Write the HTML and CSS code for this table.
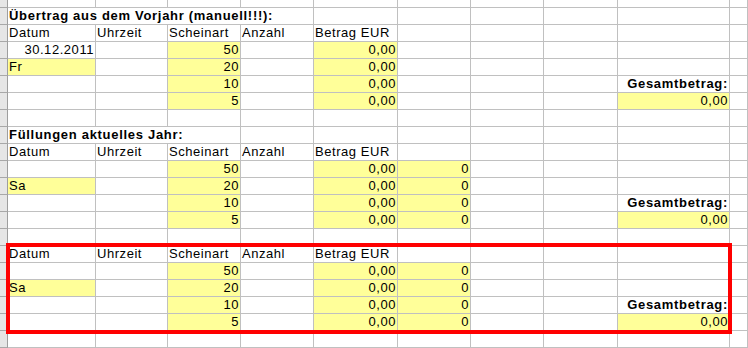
FILE: index.html
```html
<!DOCTYPE html>
<html lang="de">
<head>
<meta charset="utf-8">
<title>Tabelle</title>
<link rel="stylesheet" href="styles.css">
</head>
<body>
<div class="sheet">
  <div class="r top"><div class="h"></div><div></div><div></div><div></div><div></div><div></div><div></div><div></div><div></div><div></div><div></div></div>
  <div class="r"><div class="h"></div><div class="t4 b">Übertrag aus dem Vorjahr (manuell!!!):</div><div></div><div></div><div></div><div></div><div></div><div></div></div>
  <div class="r"><div class="h"></div><div>Datum</div><div>Uhrzeit</div><div>Scheinart</div><div>Anzahl</div><div>Betrag EUR</div><div></div><div></div><div></div><div></div><div></div></div>
  <div class="r"><div class="h"></div><div class="n">30.12.2011</div><div></div><div class="y n">50</div><div></div><div class="y n">0,00</div><div></div><div></div><div></div><div></div><div></div></div>
  <div class="r"><div class="h"></div><div class="y">Fr</div><div></div><div class="y n">20</div><div></div><div class="y n">0,00</div><div></div><div></div><div></div><div></div><div></div></div>
  <div class="r"><div class="h"></div><div></div><div></div><div class="y n">10</div><div></div><div class="y n">0,00</div><div></div><div></div><div></div><div class="b n">Gesamtbetrag:</div><div></div></div>
  <div class="r"><div class="h"></div><div></div><div></div><div class="y n">5</div><div></div><div class="y n">0,00</div><div></div><div></div><div></div><div class="y n">0,00</div><div></div></div>
  <div class="r"><div class="h"></div><div></div><div></div><div></div><div></div><div></div><div></div><div></div><div></div><div></div><div></div></div>

  <div class="r"><div class="h"></div><div class="t3 b">Füllungen aktuelles Jahr:</div><div></div><div></div><div></div><div></div><div></div><div></div><div></div></div>
  <div class="r"><div class="h"></div><div>Datum</div><div>Uhrzeit</div><div>Scheinart</div><div>Anzahl</div><div>Betrag EUR</div><div></div><div></div><div></div><div></div><div></div></div>
  <div class="r"><div class="h"></div><div></div><div></div><div class="y n">50</div><div></div><div class="y n">0,00</div><div class="y n">0</div><div></div><div></div><div></div><div></div></div>
  <div class="r"><div class="h"></div><div class="y">Sa</div><div></div><div class="y n">20</div><div></div><div class="y n">0,00</div><div class="y n">0</div><div></div><div></div><div></div><div></div></div>
  <div class="r"><div class="h"></div><div></div><div></div><div class="y n">10</div><div></div><div class="y n">0,00</div><div class="y n">0</div><div></div><div></div><div class="b n">Gesamtbetrag:</div><div></div></div>
  <div class="r"><div class="h"></div><div></div><div></div><div class="y n">5</div><div></div><div class="y n">0,00</div><div class="y n">0</div><div></div><div></div><div class="y n">0,00</div><div></div></div>
  <div class="r"><div class="h"></div><div></div><div></div><div></div><div></div><div></div><div></div><div></div><div></div><div></div><div></div></div>

  <div class="r"><div class="h"></div><div>Datum</div><div>Uhrzeit</div><div>Scheinart</div><div>Anzahl</div><div>Betrag EUR</div><div></div><div></div><div></div><div></div><div></div></div>
  <div class="r"><div class="h"></div><div></div><div></div><div class="y n">50</div><div></div><div class="y n">0,00</div><div class="y n">0</div><div></div><div></div><div></div><div></div></div>
  <div class="r"><div class="h"></div><div class="y">Sa</div><div></div><div class="y n">20</div><div></div><div class="y n">0,00</div><div class="y n">0</div><div></div><div></div><div></div><div></div></div>
  <div class="r"><div class="h"></div><div></div><div></div><div class="y n">10</div><div></div><div class="y n">0,00</div><div class="y n">0</div><div></div><div></div><div class="b n">Gesamtbetrag:</div><div></div></div>
  <div class="r"><div class="h"></div><div></div><div></div><div class="y n">5</div><div></div><div class="y n">0,00</div><div class="y n">0</div><div></div><div></div><div class="y n">0,00</div><div></div></div>
  <div class="r"><div class="h"></div><div></div><div></div><div></div><div></div><div></div><div></div><div></div><div></div><div></div><div></div></div>
  <div class="r"><div class="h"></div><div></div><div></div><div></div><div></div><div></div><div></div><div></div><div></div><div></div><div></div></div>

  <div class="mark"></div>
</div>
</body>
</html>
```
FILE: styles.css
```css
html, body {
  margin: 0;
  padding: 0;
  background: #ffffff;
}
body {
  width: 748px;
  height: 348px;
  overflow: hidden;
  font-family: "Liberation Sans", Arial, sans-serif;
  font-size: 13px;
  color: #000000;
}
.sheet {
  position: relative;
  width: 748px;
  height: 348px;
  overflow: hidden;
}
.r {
  display: grid;
  grid-template-columns: 8px 88px 72px 73px 73px 84px 73px 73px 74px 112px 1fr;
  height: 17px;
}
.r.top {
  height: 8px;
}
.r > div {
  border-right: 1px solid #c0c0c0;
  border-bottom: 1px solid #c0c0c0;
  padding: 0 1px 0 1px;
  line-height: 15px;
  letter-spacing: 0.55px;
  white-space: nowrap;
  overflow: hidden;
  min-width: 0;
}
.r > .h {
  background: #e6e6e6;
  border-right: 1px solid #9e9e9e;
  border-bottom: 1px solid #a8a8a8;
  padding: 0;
}
.r > .t4 {
  grid-column: span 4;
  overflow: visible;
}
.r > .t3 {
  grid-column: span 3;
  overflow: visible;
}
.r > .b {
  font-weight: bold;
  letter-spacing: 0.7px;
}
.n {
  text-align: right;
}
.y {
  background: #ffff99;
}
.mark {
  position: absolute;
  left: 6px;
  top: 243px;
  width: 726px;
  height: 91px;
  box-sizing: border-box;
  border: 4px solid #ff0000;
}
```
